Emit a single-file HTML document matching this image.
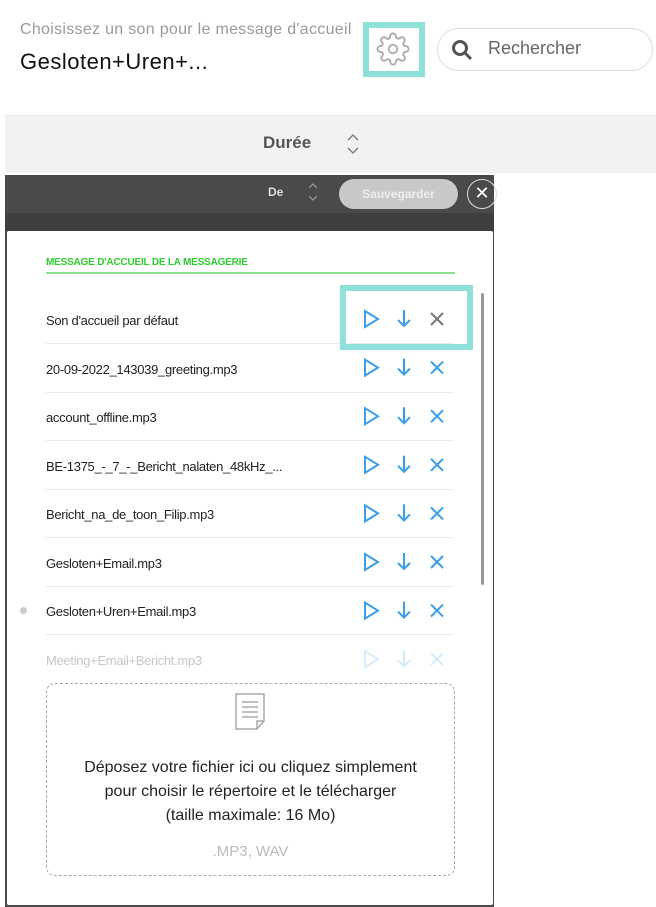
<!DOCTYPE html>
<html><head><meta charset="utf-8"><style>
*{margin:0;padding:0;box-sizing:border-box}
body{width:656px;height:907px;background:#fff;font-family:"Liberation Sans",sans-serif;position:relative;overflow:hidden}
.abs{position:absolute}
.row{position:absolute;left:46px;width:408px;height:48px;border-bottom:1px solid #ececec;font-size:13px;color:#222;letter-spacing:-0.3px}
.row span{position:absolute;left:0;top:17px}
</style></head><body>
<div class="abs" style="left:20px;top:21px;font-size:16px;color:#9a9a9a;letter-spacing:0.3px">Choisissez un son pour le message d'accueil</div>
<div class="abs" style="left:20px;top:49px;font-size:22px;color:#111;letter-spacing:0.5px">Gesloten+Uren+...</div>
<div class="abs" style="left:363px;top:22px;width:62px;height:55px;border:6px solid #8ee0d9"></div>
<svg class="abs" style="left:376px;top:32px" width="34" height="34" viewBox="0 0 24 24" fill="none" stroke="#aaa" stroke-width="1.3"><circle cx="12" cy="12" r="3"/><path d="M19.4 15a1.65 1.65 0 0 0 .33 1.820l.06.06a2 2 0 0 1-2.83 2.83l-.06-.06a1.65 1.65 0 0 0-1.82-.33 1.65 1.65 0 0 0-1 1.51V21a2 2 0 0 1-4 0v-.09A1.65 1.65 0 0 0 9 19.4a1.65 1.65 0 0 0-1.82.33l-.06.06a2 2 0 0 1-2.83-2.83l.06-.06A1.65 1.65 0 0 0 4.68 15a1.65 1.65 0 0 0-1.51-1H3a2 2 0 0 1 0-4h.09A1.650 1.65 0 0 0 4.6 9a1.65 1.65 0 0 0-.33-1.82l-.06-.06a2 2 0 0 1 2.83-2.83l.06.06A1.65 1.65 0 0 0 9 4.68a1.65 1.65 0 0 0 1-1.51V3a2 2 0 0 1 4 0v.09a1.65 1.65 0 0 0 1 1.51 1.65 1.65 0 0 0 1.82-.33l.06-.06a2 2 0 0 1 2.83 2.83l-.06.06A1.65 1.65 0 0 0 19.4 9a1.65 1.65 0 0 0 1.51 1H21a2 2 0 0 1 0 4h-.09a1.65 1.65 0 0 0-1.51 1z"/></svg>
<div class="abs" style="left:437px;top:28px;width:216px;height:43px;border:1px solid #ddd;border-radius:22px"></div>
<svg class="abs" style="left:450px;top:38px" width="24" height="24" viewBox="0 0 24 24" fill="none" stroke="#555" stroke-width="3"><circle cx="10" cy="10" r="6.5"/><path d="M15 15l6 6"/></svg>
<div class="abs" style="left:488px;top:38px;font-size:18px;color:#666">Rechercher</div>
<div class="abs" style="left:5px;top:115px;width:651px;height:58px;background:#f2f2f2;border-top:1px solid #eaeaea"></div>
<div class="abs" style="left:263px;top:133px;font-size:17px;color:#555;font-weight:bold">Durée</div>
<svg class="abs" style="left:345px;top:132px" width="16" height="24" viewBox="0 0 16 24" fill="none" stroke="#777" stroke-width="1.3"><path d="M3 8l5-5 5 5M3 16l5 5 5-5"/></svg>
<div class="abs" style="left:5px;top:175px;width:489px;height:732px;background:#4a4a4a"></div>
<div class="abs" style="left:5px;top:213px;width:489px;height:18px;background:#3f3f3f"></div>
<div class="abs" style="left:268px;top:185px;font-size:12px;color:#ddd;font-weight:bold">De</div>
<svg class="abs" style="left:306px;top:181px" width="14" height="22" viewBox="0 0 14 22" fill="none" stroke="#999" stroke-width="1.2"><path d="M3 7l4-4 4 4M3 15l4 4 4-4"/></svg>
<div class="abs" style="left:339px;top:179px;width:119px;height:30px;background:#c8c8c8;border-radius:15px;color:#eee;font-size:12px;font-weight:bold;text-align:center;line-height:30px">Sauvegarder</div>
<div class="abs" style="left:467px;top:179px;width:30px;height:30px;border:1.5px solid #ddd;border-radius:50%;color:#fff;font-size:18px;text-align:center;line-height:27px">✕</div>
<div class="abs" style="left:7px;top:231px;width:486px;height:674px;background:#fff;border-radius:2px"></div>
<div class="abs" style="left:46px;top:257px;font-size:10px;font-weight:bold;color:#2ecc2e;letter-spacing:-0.2px">MESSAGE D'ACCUEIL DE LA MESSAGERIE</div>
<div class="abs" style="left:46px;top:272px;width:409px;height:2px;background:#8de08d"></div>
<div class="abs" style="left:481px;top:293px;width:3px;height:292px;background:#999;border-radius:2px"></div>

<div class="row" style="top:296px"><span>Son d'accueil par défaut</span></div>
<div class="row" style="top:345px"><span>20-09-2022_143039_greeting.mp3</span></div>
<div class="row" style="top:393px"><span>account_offline.mp3</span></div>
<div class="row" style="top:442px"><span>BE-1375_-_7_-_Bericht_nalaten_48kHz_...</span></div>
<div class="row" style="top:490px"><span>Bericht_na_de_toon_Filip.mp3</span></div>
<div class="row" style="top:539px"><span>Gesloten+Email.mp3</span></div>
<div class="row" style="top:587px"><span>Gesloten+Uren+Email.mp3</span></div>
<div class="row" style="top:636px;border:none;opacity:.25"><span>Meeting+Email+Bericht.mp3</span></div>
<div class="abs" style="left:20px;top:607px;width:7px;height:7px;border-radius:50%;background:#ccc"></div>

<svg class="abs" style="left:360px;top:306px" width="90" height="365" viewBox="0 0 90 365" fill="none" stroke-width="2">
<g id="r"><path d="M5 5l13 8-13 8z" stroke="#3a9ee8"/><path d="M44 4v16M38 14l6 6 6-6" stroke="#3a9ee8"/></g>
<path d="M71 7l12 12M83 7l-12 12" stroke="#777"/>
<g transform="translate(0,48.6)"><use href="#r"/><path d="M71 7l12 12M83 7l-12 12" stroke="#3a9ee8"/></g>
<g transform="translate(0,97.2)"><use href="#r"/><path d="M71 7l12 12M83 7l-12 12" stroke="#3a9ee8"/></g>
<g transform="translate(0,145.8)"><use href="#r"/><path d="M71 7l12 12M83 7l-12 12" stroke="#3a9ee8"/></g>
<g transform="translate(0,194.4)"><use href="#r"/><path d="M71 7l12 12M83 7l-12 12" stroke="#3a9ee8"/></g>
<g transform="translate(0,243)"><use href="#r"/><path d="M71 7l12 12M83 7l-12 12" stroke="#3a9ee8"/></g>
<g transform="translate(0,291.6)"><use href="#r"/><path d="M71 7l12 12M83 7l-12 12" stroke="#3a9ee8"/></g>
<g transform="translate(0,340.2)" opacity=".2"><use href="#r"/><path d="M71 7l12 12M83 7l-12 12" stroke="#3a9ee8"/></g>
</svg>
<div class="abs" style="left:340px;top:285px;width:133px;height:65px;border:6px solid #8ee0d9"></div>

<div class="abs" style="left:46px;top:683px;width:409px;height:193px;border:1.5px dashed #aaa;border-radius:9px"></div>
<svg class="abs" style="left:233px;top:692px" width="34" height="40" viewBox="0 0 34 40" fill="none" stroke="#aaa" stroke-width="1.5"><path d="M3 2h28v27l-7 8H3z M24 37v-8h7"/><path d="M9 10h16M9 15h16M9 20h16M9 25h16"/></svg>
<div class="abs" style="left:30px;top:756px;width:441px;text-align:center;font-size:16px;line-height:24px;color:#222">Déposez votre fichier ici ou cliquez simplement<br>pour choisir le répertoire et le télécharger<br>(taille maximale: 16 Mo)</div>
<div class="abs" style="left:46px;top:843px;width:409px;text-align:center;font-size:15px;color:#bbb">.MP3, WAV</div>
</body></html>
